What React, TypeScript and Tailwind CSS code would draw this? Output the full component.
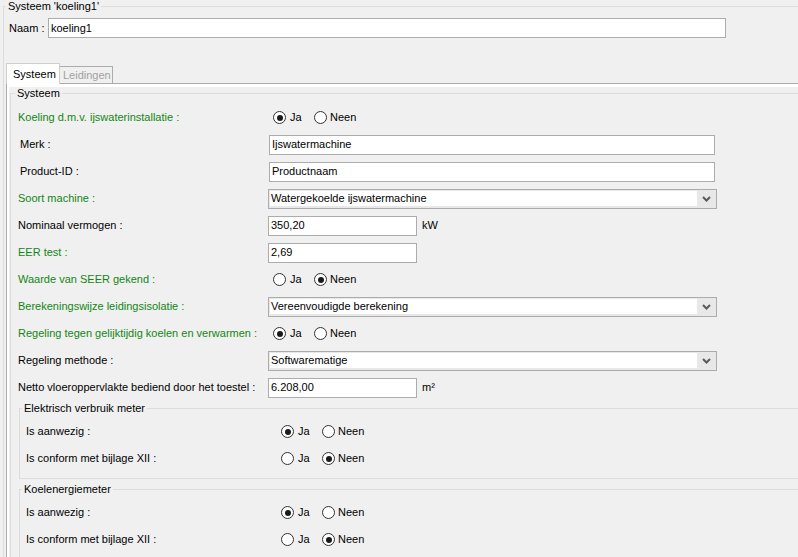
import React from "react";

const FONT = { fontFamily: '"Liberation Sans", Arial, sans-serif' };

function Radio({ checked }: { checked: boolean }) {
  return (
    <span className="flex h-[13px] w-[13px] shrink-0 items-center justify-center rounded-full border border-[#333333] bg-white">
      {checked && <span className="h-[6px] w-[6px] rounded-full bg-[#1a1a1a]" />}
    </span>
  );
}

function RadioPair({ ja }: { ja: boolean }) {
  return (
    <div className="flex items-center">
      <div className="flex w-[41px] items-center gap-[4px]">
        <Radio checked={ja} />
        <span>Ja</span>
      </div>
      <div className="flex items-center gap-[3px]">
        <Radio checked={!ja} />
        <span>Neen</span>
      </div>
    </div>
  );
}

function TextBox({ value, w }: { value: string; w: string }) {
  return (
    <div className={`flex h-[20px] items-center border border-[#acacac] bg-white pl-[2px] ${w}`}>
      {value}
    </div>
  );
}

function Select({ value }: { value: string }) {
  return (
    <div className="flex h-[20px] w-[449px] border border-[#acacac] bg-[#e8e8e8]">
      <div className="mb-[2px] ml-[1px] mt-[1px] flex flex-1 items-center bg-white pl-[1px]">{value}</div>
      <div className="flex w-[19px] items-center justify-center">
        <svg width="9" height="6" viewBox="0 0 9 6">
          <path d="M1 1 L4.5 4.5 L8 1" fill="none" stroke="#5a5a5a" strokeWidth="2" />
        </svg>
      </div>
    </div>
  );
}

function Row({
  label,
  green,
  children,
  indent,
}: {
  label: string;
  green?: boolean;
  children: React.ReactNode;
  indent?: boolean;
}) {
  return (
    <div className="flex h-[27px] items-center">
      <div
        className={`${indent ? "w-[258px] pl-[9px]" : "w-[257px] pl-[7px]"} ${green ? "text-[#138613]" : "text-black"}`}
      >
        {label}
      </div>
      {children}
    </div>
  );
}

function MeterRow({ label, ja }: { label: string; ja: boolean }) {
  return (
    <div className="flex h-[27px] items-center">
      <div className="w-[261px] pl-[6px]">{label}</div>
      <RadioPair ja={ja} />
    </div>
  );
}

function Meter({ title, a, b, className }: { title: string; a: boolean; b: boolean; className: string }) {
  return (
    <fieldset className={`ml-[8px] border border-[#dcdcdc] pb-[6px] pt-[3px] ${className}`}>
      <legend className="ml-[2px] px-[2px] leading-[13px]">{title}</legend>
      <MeterRow label="Is aanwezig :" ja={a} />
      <MeterRow label="Is conform met bijlage XII :" ja={b} />
    </fieldset>
  );
}

export default function App() {
  return (
    <div
      className="h-[557px] w-[798px] overflow-hidden bg-[#f0f0f0] pl-[3px] text-[11px] leading-[13px] text-black"
      style={FONT}
    >
      <fieldset className="w-[850px] border border-[#dcdcdc]">
        <legend className="ml-[2px] px-[2px] leading-[13px]">Systeem 'koeling1'</legend>
        <div className="mt-[5px] flex items-center">
          <div className="w-[44px] pl-[5px]">Naam :</div>
          <TextBox value="koeling1" w="w-[678px]" />
        </div>

        <div className="ml-[2px] mt-[25px]">
          <div className="flex items-end">
            <div className="relative z-10 -mb-px flex h-[21px] w-[54px] items-center border border-b-0 border-[#cfcfcf] bg-white pl-[6px]">
              Systeem
            </div>
            <div className="flex h-[17px] w-[53px] items-center border border-b-0 border-l-0 border-[#acacac] pl-[3px] text-[#a0a0a0]">
              Leidingen
            </div>
          </div>
          <div className="border-l border-t border-[#acacac] bg-white pl-[2px] pt-[3px]">
            <div className="h-[480px] bg-[#f0f0f0] pl-[1px]">
              <fieldset className="h-[520px] border border-[#dcdcdc] pt-[4px]">
                <legend className="ml-[4px] px-[2px] leading-[13px]">Systeem</legend>
                <Row label="Koeling d.m.v. ijswaterinstallatie :" green>
                  <div className="ml-[5px]">
                    <RadioPair ja={true} />
                  </div>
                </Row>
                <Row label="Merk :" indent>
                  <TextBox value="Ijswatermachine" w="w-[446px]" />
                </Row>
                <Row label="Product-ID :" indent>
                  <TextBox value="Productnaam" w="w-[446px]" />
                </Row>
                <Row label="Soort machine :" green>
                  <Select value="Watergekoelde ijswatermachine" />
                </Row>
                <Row label="Nominaal vermogen :">
                  <TextBox value="350,20" w="w-[149px]" />
                  <span className="ml-[5px]">kW</span>
                </Row>
                <Row label="EER test :" green>
                  <TextBox value="2,69" w="w-[149px]" />
                </Row>
                <Row label="Waarde van SEER gekend :" green>
                  <div className="ml-[5px]">
                    <RadioPair ja={false} />
                  </div>
                </Row>
                <Row label="Berekeningswijze leidingsisolatie :" green>
                  <Select value="Vereenvoudigde berekening" />
                </Row>
                <Row label="Regeling tegen gelijktijdig koelen en verwarmen :" green>
                  <div className="ml-[5px]">
                    <RadioPair ja={true} />
                  </div>
                </Row>
                <Row label="Regeling methode :">
                  <Select value="Softwarematige" />
                </Row>
                <Row label="Netto vloeroppervlakte bediend door het toestel :">
                  <TextBox value="6.208,00" w="w-[149px]" />
                  <span className="ml-[5px]">m²</span>
                </Row>
                <Meter title="Elektrisch verbruik meter" a={true} b={false} className="mt-[1px]" />
                <Meter title="Koelenergiemeter" a={true} b={false} className="mt-[4px]" />
              </fieldset>
            </div>
          </div>
        </div>
      </fieldset>
    </div>
  );
}
